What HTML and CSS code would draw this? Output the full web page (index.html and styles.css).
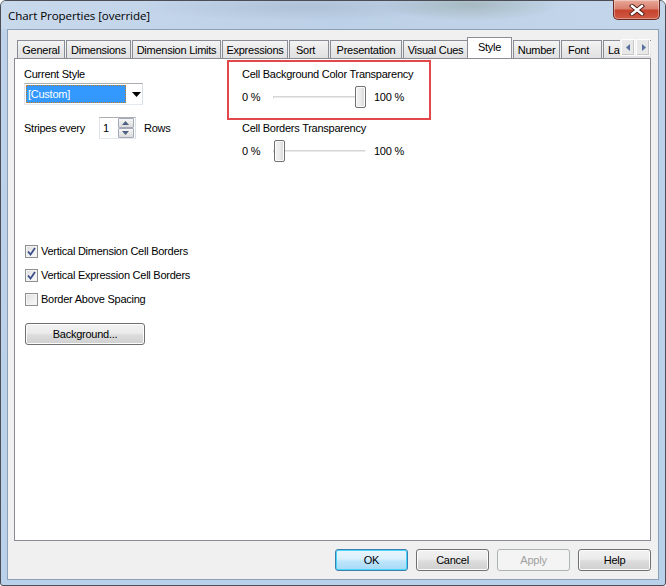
FILE: index.html
```html
<!DOCTYPE html>
<html>
<head>
<meta charset="utf-8">
<link rel="stylesheet" href="styles.css">
</head>
<body>
<div class="window">
  <div class="titlebar">
    <span class="title">Chart Properties [override]</span>
    <div class="close">
      <svg width="16" height="12" viewBox="0 0 16 12"><path d="M3 2 L13 10 M13 2 L3 10" stroke="#4a1a14" stroke-width="4.2" stroke-linecap="square"/><path d="M3 2 L13 10 M13 2 L3 10" stroke="#fff" stroke-width="2.4" stroke-linecap="square"/></svg>
    </div>
  </div>
  <div class="client">
    <div class="tabstrip">
      <div class="tab t-general">General</div>
      <div class="tab t-dim">Dimensions</div>
      <div class="tab t-diml">Dimension Limits</div>
      <div class="tab t-expr">Expressions</div>
      <div class="tab t-sort">Sort</div>
      <div class="tab t-pres">Presentation</div>
      <div class="tab t-vis">Visual Cues</div>
      <div class="tab t-style selected">Style</div>
      <div class="tab t-num">Number</div>
      <div class="tab t-font">Font</div>
      <div class="tab t-lay">Layout</div>
      <div class="scroller">
        <div class="sbtn"><svg width="5" height="7" viewBox="0 0 5 7"><path d="M4 0 L0 3.5 L4 7 Z" fill="#5a6f9c"/></svg></div>
        <div class="sbtn"><svg width="5" height="7" viewBox="0 0 5 7"><path d="M1 0 L5 3.5 L1 7 Z" fill="#5a6f9c"/></svg></div>
      </div>
    </div>
    <div class="panel">
      <div class="leftcol">
        <div class="label">Current Style</div>
        <div class="combo">
          <div class="combo-sel">[Custom]</div>
          <svg class="combo-arrow" width="9" height="5" viewBox="0 0 9 5"><path d="M0 0 H9 L4.5 5 Z" fill="#000"/></svg>
        </div>
        <div class="stripes">
          <span>Stripes every</span>
          <div class="spin">
            <span class="spin-val">1</span>
            <div class="spin-btns">
              <div class="spin-btn"><svg width="7" height="4" viewBox="0 0 7 4"><path d="M0 4 L3.5 0 L7 4 Z" fill="#4d6185"/></svg></div>
              <div class="spin-btn"><svg width="7" height="4" viewBox="0 0 7 4"><path d="M0 0 L3.5 4 L7 0 Z" fill="#4d6185"/></svg></div>
            </div>
          </div>
          <span class="rows">Rows</span>
        </div>
        <div class="checks">
          <div class="check"><span class="box on"><svg width="9" height="9" viewBox="0 0 9 9"><path d="M1 4.5 L3.5 7.5 L8 1" stroke="#3d4f8a" stroke-width="1.8" fill="none"/></svg></span>Vertical Dimension Cell Borders</div>
          <div class="check"><span class="box on"><svg width="9" height="9" viewBox="0 0 9 9"><path d="M1 4.5 L3.5 7.5 L8 1" stroke="#3d4f8a" stroke-width="1.8" fill="none"/></svg></span>Vertical Expression Cell Borders</div>
          <div class="check"><span class="box"></span>Border Above Spacing</div>
        </div>
        <div class="btn bg-btn">Background...</div>
      </div>
      <div class="rightcol">
        <div class="redbox">
          <div class="label">Cell Background Color Transparency</div>
          <div class="slider-row">
            <span class="pct0">0 %</span>
            <div class="track"><div class="groove"></div><div class="thumb at-end"></div></div>
            <span>100 %</span>
          </div>
        </div>
        <div class="group2">
          <div class="label">Cell Borders Transparency</div>
          <div class="slider-row">
            <span class="pct0">0 %</span>
            <div class="track"><div class="groove"></div><div class="thumb at-start"></div></div>
            <span>100 %</span>
          </div>
        </div>
      </div>
    </div>
    <div class="buttons">
      <div class="btn default">OK</div>
      <div class="btn">Cancel</div>
      <div class="btn disabled">Apply</div>
      <div class="btn">Help</div>
    </div>
  </div>
</div>
</body>
</html>
```
FILE: styles.css
```css
* { box-sizing: border-box; }
html, body { margin: 0; padding: 0; }
body {
  width: 666px; height: 586px; overflow: hidden;
  background: #fff;
  font-family: "Liberation Sans", Arial, sans-serif;
  font-size: 11px; color: #000;
  letter-spacing: -0.25px;
}
.window {
  width: 666px; height: 586px;
  border: 1px solid #4b4f55;
  border-radius: 6px 6px 3px 3px;
  background: linear-gradient(180deg, #c3d5ea 0px, #bdd2ea 40px, #b9d1ea 100%);
  display: flex; flex-direction: column;
  position: relative;
}
.titlebar {
  height: 28px; flex: none;
  display: flex; align-items: center;
  padding-left: 7px;
  background:
    radial-gradient(ellipse 90px 16px at 470px 4px, rgba(120,140,120,0.35), rgba(120,140,120,0) 100%),
    radial-gradient(ellipse 160px 14px at 300px 6px, rgba(150,165,185,0.35), rgba(150,165,185,0) 100%),
    linear-gradient(90deg, #c9d9ec 0%, #bcd0e7 50%, #c4d6ea 100%);
  border-radius: 5px 5px 0 0;
}
.title { font-family: "Open Sans", "Liberation Sans", sans-serif; font-size: 11.6px; color: #000; letter-spacing: -0.1px; }
.close {
  position: absolute; top: -1px; right: 5px;
  width: 47px; height: 20px;
  border: 1px solid #6b2b24; border-top: none;
  border-radius: 0 0 5px 5px;
  background: linear-gradient(180deg, #e9a99a 0%, #d9806e 45%, #c7442f 55%, #cf5a43 100%);
  display: flex; align-items: center; justify-content: center;
  box-shadow: inset 0 0 0 1px rgba(255,255,255,0.35);
}
.client {
  margin: 0 6px 5px 6px;
  height: 551px;
  border: 1px solid #8da0b6;
  background: #f0f0f0;
  display: flex; flex-direction: column;
  padding: 7px 7px 0 6px;
}
.tabstrip {
  height: 21px; flex: none;
  display: flex; align-items: flex-end;
  padding-left: 3px;
  position: relative; z-index: 2;
  overflow: hidden;
}
.tab {
  height: 18px;
  border: 1px solid #898c95; border-bottom: none;
  background: linear-gradient(180deg, #f4f4f4 0%, #e9e9e9 50%, #e1e1e1 100%);
  padding: 0 3px;
  margin-right: 1px;
  display: flex; align-items: center; justify-content: center;
  white-space: nowrap; flex: none;
}
.t-general { width: 48px; }
.t-dim { width: 65px; }
.t-diml { width: 89px; }
.t-expr { width: 66px; }
.t-sort { width: 40px; justify-content: flex-start; padding-left: 6px; }
.t-pres { width: 72px; }
.t-vis { width: 65px; }
.t-num { width: 47px; }
.t-font { width: 41px; justify-content: flex-start; padding-left: 6px; }
.t-lay { width: 60px; justify-content: flex-start; padding-left: 4px; }
.tab.selected {
  height: 22px;
  background: #fff;
  margin: 0 1px -1px -2px;
  width: 45px;
  align-items: flex-start; padding-top: 3px;
}
.scroller {
  position: absolute; right: 1px; top: 2px;
  display: flex; gap: 1px;
  background: #f0f0f0;
  padding-left: 1px;
}
.sbtn {
  width: 14px; height: 17px;
  border: 1px solid #fdfdfd;
  background: #e8e8e8;
  box-shadow: inset -1px -1px 0 #c8c8c8;
  display: flex; align-items: center; justify-content: center;
}
.panel {
  height: 483px; flex: none;
  background: #fff;
  border: 1px solid #898c95;
  display: flex;
  padding: 1px 0 0 9px;
  position: relative; z-index: 1;
}
.label { height: 14px; line-height: 14px; white-space: nowrap; }
.leftcol { width: 203px; flex: none; display: flex; flex-direction: column; padding-top: 7px; }
.combo {
  margin-top: 2px;
  width: 119px; height: 22px;
  border: 1px solid #abadb3;
  border-color: #abadb3 #dbdfe6 #e3e9ef #e2e3ea;
  background: #fff;
  display: flex; align-items: center;
  padding-left: 1px;
}
.combo-sel {
  width: 100px; height: 18px;
  background: #3399ff; color: #fff;
  line-height: 18px; padding-left: 2px;
  outline: 1px dotted #c07a2a; outline-offset: -1px;
}
.combo-arrow { margin-left: 6px; }
.stripes {
  margin-top: 12px;
  height: 22px;
  display: flex; align-items: center;
}
.spin {
  margin-left: 14px;
  width: 37px; height: 22px;
  border: 1px solid #abadb3;
  border-color: #abadb3 #dbdfe6 #e3e9ef #e2e3ea;
  background: #fff;
  display: flex; align-items: center;
}
.spin-val { width: 18px; padding-left: 3px; }
.spin-btns { display: flex; flex-direction: column; gap: 0; }
.spin-btn {
  width: 16px; height: 10px;
  border: 1px solid #a3a9b8;
  background: linear-gradient(180deg, #f6f6f6, #dcdcdc);
  display: flex; align-items: center; justify-content: center;
  border-radius: 1px;
}
.rows { margin-left: 8px; }
.checks { margin-top: 103px; display: flex; flex-direction: column; gap: 6px; }
.check { height: 18px; display: flex; align-items: center; white-space: nowrap; }
.box {
  width: 13px; height: 13px; margin: 0 3px 0 1px;
  border: 1px solid #8e8f8f;
  background: linear-gradient(135deg, #dcdcdc 0%, #f0f0f0 60%, #fbfbfb 100%);
  box-shadow: inset 0 0 0 1px #f4f4f4;
  display: flex; align-items: center; justify-content: center;
}
.btn {
  width: 73px; height: 22px;
  border: 1px solid #707070;
  border-radius: 3px;
  background: linear-gradient(180deg, #f2f2f2 0%, #ebebeb 45%, #dddddd 55%, #cfcfcf 100%);
  box-shadow: inset 0 0 0 1px #fcfcfc;
  display: flex; align-items: center; justify-content: center;
}
.bg-btn { width: 120px; margin-top: 15px; margin-left: 1px; }
.btn.default {
  border-color: #3c7fb1;
  background: linear-gradient(180deg, #eaf6fd 0%, #d9f0fc 45%, #bee6fd 55%, #a7d9f5 100%);
  box-shadow: inset 0 0 0 1px #48d6f9;
}
.btn.disabled {
  color: #a0a0a0;
  border-color: #adb2b5;
  background: #f4f4f4;
  box-shadow: none;
}
.rightcol { display: flex; flex-direction: column; width: 230px; }
.redbox {
  width: 204px; height: 60px;
  border: 2px solid #e2474a;
  padding: 5px 0 0 13px;
}
.slider-row { display: flex; align-items: center; height: 22px; margin-top: 5px; white-space: nowrap; }
.pct0 { width: 31px; }
.track { position: relative; width: 93px; height: 22px; margin-right: 8px; }
.groove {
  position: absolute; left: 0; right: 0; top: 10px; height: 3px;
  border: 1px solid #d6d6d6; border-bottom-color: #fff; border-right-color: #fff;
  background: #e7eaea;
}
.thumb {
  position: absolute; top: 0; width: 11px; height: 22px;
  border: 1px solid #707070; border-radius: 2px;
  background: linear-gradient(90deg, #f2f2f2 0%, #ebebeb 50%, #d8d8d8 100%);
  box-shadow: inset 0 0 0 1px #fcfcfc;
}
.thumb.at-end { right: 0; }
.thumb.at-start { left: 1px; }
.group2 { padding: 1px 0 0 15px; }
.group2 .slider-row { margin-top: 5px; }
.buttons {
  display: flex; justify-content: flex-end; gap: 8px;
  margin-top: 8px;
  margin-right: 0;
}
```
